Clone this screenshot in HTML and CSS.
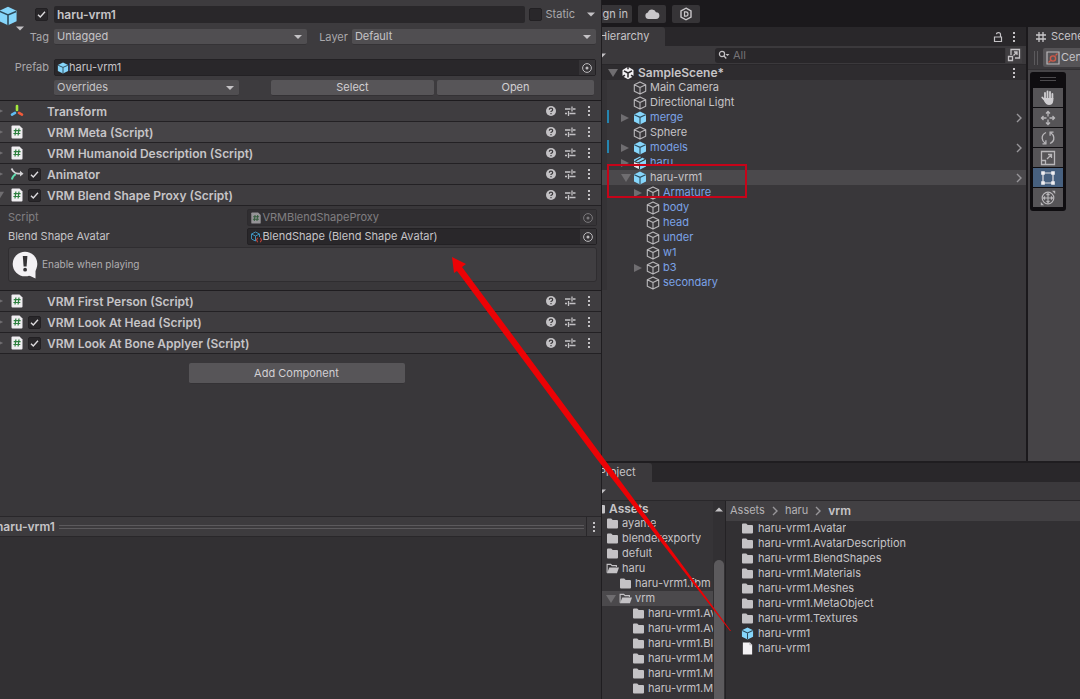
FILE: index.html
```html
<!DOCTYPE html>
<html lang="en">
<head>
<meta charset="utf-8">
<title>SampleScene</title>
<link rel="stylesheet" href="styles.css">
</head>
<body>
<svg class="defs" aria-hidden="true">
  <symbol id="cube" viewBox="0 0 14 14"><path d="M7 .5 13 3.4V10.600L7 13.500 1 10.600V3.400z" fill="#86d6fb"/><path d="M1.300 3.800 7 6.300l5.700-2.500M7 6.300v7" fill="none" stroke="#2d4a5a" stroke-width="1.100"/></symbol>
  <symbol id="box" viewBox="0 0 14 14"><path d="M7 .9 12.700 3.700v6.600L7 13.100 1.300 10.300V3.700zM1.300 3.700 7 6.500l5.700-2.800M7 6.500v6.600" fill="none" stroke="#b9b7ba" stroke-width="1.100" stroke-linejoin="round"/></symbol>
  <symbol id="model" viewBox="0 0 14 14"><path d="M7 .5 13 3.400V10.600L7 13.500 1 10.600V3.400z" fill="#86d6fb"/><path d="M1 6v4.600l6 2.900V8z" fill="#e6e4e7"/><path d="M1.300 5.500 5 7l7.500-3.800M6.500 7.500v6M2.500 5 9 1.200" fill="none" stroke="#353336" stroke-width="1.100"/></symbol>
  <symbol id="folder" viewBox="0 0 13 12"><path d="M1 2q0-1 1-1h3.200l1.500 1.500H11q1 0 1 1V10q0 1-1 1H2q-1 0-1-1z" fill="#c4c2c5"/></symbol>
  <symbol id="folder-open" viewBox="0 0 14 12"><path d="M1.200 10.500V1.500h3.900l1.400 1.400h4.700v1.600" fill="none" stroke="#c4c2c5" stroke-width="1.200"/><path d="M3.600 5H14l-2.200 6H1z" fill="#c4c2c5"/></symbol>
  <symbol id="page" viewBox="0 0 12 14"><path d="M1 .5h7.500L11 3v10.500H1z" fill="#f3f1f4"/><path d="M8.500.5V3H11" fill="none" stroke="#aaa8ab" stroke-width=".8"/></symbol>
  <symbol id="script" viewBox="0 0 12 14"><path d="M.5 1.500q0-1 1-1h7l3 3v9q0 1-1 1h-9q-1 0-1-1z" fill="#f0eef1"/><path d="M4.900 3.500 4 10.500M8 3.500 7.100 10.500M2.700 5.600h6.900M2.400 8.500h6.900" stroke="#2f8040" stroke-width="1.200" fill="none"/></symbol>
  <symbol id="axes" viewBox="0 0 14 14"><g stroke-width="2.600" stroke-linecap="round"><path d="M7 2v4" stroke="#a5ea3e"/><path d="M5 8.800 2 10.600" stroke="#61bdf2"/><path d="M9 8.800l3 1.800" stroke="#f05a3a"/></g></symbol>
  <symbol id="animator" viewBox="0 0 14 14"><path d="M1.500 1.500 3 4q2 2.500 5 2.600h3" fill="none" stroke="#d4d2d5" stroke-width="1.800"/><path d="M10 3.800 13.500 6.700 10 9.600z" fill="#d4d2d5"/><path d="M5.800 7.200Q3 8.500 1.800 12.500" fill="none" stroke="#5fdcaf" stroke-width="1.900"/></symbol>
  <symbol id="help" viewBox="0 0 12 12"><circle cx="6" cy="6" r="5" fill="#c4c2c5"/><path d="M4.300 4.800Q4.300 3.200 6 3.200T7.700 4.700Q7.700 5.600 6 6.500v.6M6 8v1.300" fill="none" stroke="#3b393c" stroke-width="1.200"/></symbol>
  <symbol id="sliders" viewBox="0 0 12 12"><path d="M1 4h5.500M9 4h2.500M8 1.500v5M1 8.500h2M5.500 8.500h6M4.500 6v5" fill="none" stroke="#c4c2c5" stroke-width="1.300"/></symbol>
  <symbol id="dots" viewBox="0 0 4 12"><path d="M1 1h2v2H1zM1 5h2v2H1zM1 9h2v2H1z" fill="#c4c2c5"/></symbol>
  <symbol id="target" viewBox="0 0 12 12"><circle cx="6" cy="6" r="4.400" fill="none" stroke="#bcbabd"/><circle cx="6" cy="6" r="1.500" fill="#bcbabd"/></symbol>
  <symbol id="right" viewBox="0 0 8 10"><path d="M0 1 8 5 0 9z" fill="#6f6d70"/></symbol>
  <symbol id="down" viewBox="0 0 10 8"><path d="M0 0h10L5 8z" fill="#6f6d70"/></symbol>
  <symbol id="caret" viewBox="0 0 8 5"><path d="M0 .5h8l-4 4z" fill="#c4c2c5"/></symbol>
  <symbol id="chevron" viewBox="0 0 6 10"><path d="M1 1l4 4-4 4" fill="none" stroke="#98969a" stroke-width="1.400"/></symbol>
  <symbol id="unity" viewBox="0 0 14 14"><path d="M7 .8 12.500 4v6.200L7 13.300 1.500 10.200V4z" fill="#f2f0f3"/><path d="M7 7 3 4.800M7 7l4-2.200M7 7v4.600M7 0v3.200M1 11l3-1.800M13 11l-3-1.800" stroke="#2b292c" stroke-width="1.500"/></symbol>
</svg>

<div class="app">
  <section class="inspector" aria-label="Inspector">
    <header class="object">
      <button class="object-icon" aria-label="Object icon"><svg class="i20"><use href="#cube"/></svg><svg class="mini"><use href="#caret"/></svg></button>
      <div class="object-fields">
        <div class="line name-line">
          <input class="check" type="checkbox" checked aria-label="Active">
          <input class="text strong" type="text" value="haru-vrm1" aria-label="Name">
          <input class="check" type="checkbox" id="static">
          <label for="static">Static</label>
          <button class="plain" aria-label="Static options"><svg class="car"><use href="#caret"/></svg></button>
        </div>
        <div class="line tag-line">
          <label class="lead" for="tag">Tag</label>
          <span class="drop tag"><select id="tag"><option>Untagged</option></select></span>
          <label class="layer" for="layer">Layer</label>
          <span class="drop"><select id="layer"><option>Default</option></select></span>
        </div>
        <div class="line prefab-line">
          <label class="lead" for="prefab">Prefab</label>
          <div class="ref"><svg class="i12"><use href="#cube"/></svg><input id="prefab" type="text" value="haru-vrm1" readonly><button aria-label="Pick prefab"><svg class="i12"><use href="#target"/></svg></button></div>
        </div>
        <div class="line action-line">
          <span class="drop"><select aria-label="Overrides"><option>Overrides</option></select></span>
          <button class="btn">Select</button>
          <button class="btn">Open</button>
        </div>
      </div>
    </header>

    <div class="comp"><button class="fold" aria-label="Expand"><svg class="tri"><use href="#right"/></svg></button><svg class="ci"><use href="#axes"/></svg><span class="slot"></span><h2>Transform</h2><button aria-label="Help"><svg class="i12"><use href="#help"/></svg></button><button aria-label="Presets"><svg class="i12"><use href="#sliders"/></svg></button><button aria-label="More"><svg class="dots"><use href="#dots"/></svg></button></div>
    <div class="comp hot"><button class="fold" aria-label="Expand"><svg class="tri"><use href="#right"/></svg></button><svg class="ci"><use href="#script"/></svg><span class="slot"></span><h2>VRM Meta (Script)</h2><button aria-label="Help"><svg class="i12"><use href="#help"/></svg></button><button aria-label="Presets"><svg class="i12"><use href="#sliders"/></svg></button><button aria-label="More"><svg class="dots"><use href="#dots"/></svg></button></div>
    <div class="comp"><button class="fold" aria-label="Expand"><svg class="tri"><use href="#right"/></svg></button><svg class="ci"><use href="#script"/></svg><span class="slot"></span><h2>VRM Humanoid Description (Script)</h2><button aria-label="Help"><svg class="i12"><use href="#help"/></svg></button><button aria-label="Presets"><svg class="i12"><use href="#sliders"/></svg></button><button aria-label="More"><svg class="dots"><use href="#dots"/></svg></button></div>
    <div class="comp"><button class="fold" aria-label="Expand"><svg class="tri"><use href="#right"/></svg></button><svg class="ci"><use href="#animator"/></svg><span class="slot"><input class="check" type="checkbox" checked aria-label="Animator enabled"></span><h2>Animator</h2><button aria-label="Help"><svg class="i12"><use href="#help"/></svg></button><button aria-label="Presets"><svg class="i12"><use href="#sliders"/></svg></button><button aria-label="More"><svg class="dots"><use href="#dots"/></svg></button></div>
    <div class="comp"><button class="fold" aria-label="Collapse"><svg class="tri"><use href="#down"/></svg></button><svg class="ci"><use href="#script"/></svg><span class="slot"><input class="check" type="checkbox" checked aria-label="Blend Shape Proxy enabled"></span><h2>VRM Blend Shape Proxy (Script)</h2><button aria-label="Help"><svg class="i12"><use href="#help"/></svg></button><button aria-label="Presets"><svg class="i12"><use href="#sliders"/></svg></button><button aria-label="More"><svg class="dots"><use href="#dots"/></svg></button></div>
    <div class="comp-body">
      <div class="prop off">
        <label for="script-ref">Script</label>
        <div class="ref"><svg class="i12"><use href="#script"/></svg><input id="script-ref" type="text" value="VRMBlendShapeProxy" readonly><button aria-label="Pick script"><svg class="i12"><use href="#target"/></svg></button></div>
      </div>
      <div class="prop">
        <label for="avatar-ref">Blend Shape Avatar</label>
        <div class="ref"><svg class="i12" viewBox="0 0 12 12"><path d="M5.500 1 9.500 3v3M5.500 1l-4 2v5l4 2M1.500 3l4 2 4-2M5.500 5v5" fill="none" stroke="#3f8fb8"/><path d="M8 7q-1 0-1 1t-.7 1q.7 0 .7 1t1 1M10 7q1 0 1 1t.7 1q-.7 0-.7 1t-1 1" fill="none" stroke="#e0483a"/></svg><input id="avatar-ref" type="text" value="BlendShape (Blend Shape Avatar)" readonly><button aria-label="Pick avatar"><svg class="i12"><use href="#target"/></svg></button></div>
      </div>
      <div class="note"><svg class="i28" viewBox="0 0 28 28"><circle cx="14" cy="13" r="12.300" fill="#f3f1f4"/><path d="M17 24l7.500 3.500V17z" fill="#f3f1f4"/><path d="M11.800 5h4.600l-.8 10.500h-3z" fill="#343235"/><circle cx="14.100" cy="18.700" r="1.900" fill="#343235"/></svg><p>Enable when playing</p></div>
    </div>
    <div class="comp"><button class="fold" aria-label="Expand"><svg class="tri"><use href="#right"/></svg></button><svg class="ci"><use href="#script"/></svg><span class="slot"></span><h2>VRM First Person (Script)</h2><button aria-label="Help"><svg class="i12"><use href="#help"/></svg></button><button aria-label="Presets"><svg class="i12"><use href="#sliders"/></svg></button><button aria-label="More"><svg class="dots"><use href="#dots"/></svg></button></div>
    <div class="comp"><button class="fold" aria-label="Expand"><svg class="tri"><use href="#right"/></svg></button><svg class="ci"><use href="#script"/></svg><span class="slot"><input class="check" type="checkbox" checked aria-label="Look At Head enabled"></span><h2>VRM Look At Head (Script)</h2><button aria-label="Help"><svg class="i12"><use href="#help"/></svg></button><button aria-label="Presets"><svg class="i12"><use href="#sliders"/></svg></button><button aria-label="More"><svg class="dots"><use href="#dots"/></svg></button></div>
    <div class="comp"><button class="fold" aria-label="Expand"><svg class="tri"><use href="#right"/></svg></button><svg class="ci"><use href="#script"/></svg><span class="slot"><input class="check" type="checkbox" checked aria-label="Look At Bone Applyer enabled"></span><h2>VRM Look At Bone Applyer (Script)</h2><button aria-label="Help"><svg class="i12"><use href="#help"/></svg></button><button aria-label="Presets"><svg class="i12"><use href="#sliders"/></svg></button><button aria-label="More"><svg class="dots"><use href="#dots"/></svg></button></div>
    <div class="add"><button class="btn">Add Component</button></div>
    <footer class="preview">
      <div class="preview-bar"><h2>haru-vrm1</h2><span class="drag"></span><button aria-label="Preview options"><svg class="dots"><use href="#dots"/></svg></button></div>
    </footer>
  </section>

  <div class="editor">
    <nav class="topbar">
      <button class="signin">Sign in</button>
      <button aria-label="Cloud"><svg class="i16" viewBox="0 0 16 16"><path d="M4.500 13a3.300 3.300 0 0 1-.6-6.500A4.300 4.300 0 0 1 12 6.200 3.400 3.400 0 0 1 12 13z" fill="#c9c7ca"/></svg></button>
      <button aria-label="Services"><svg class="i16" viewBox="0 0 16 16"><path d="M8 2.200 13 5v6l-5 2.800L3 11V5z" fill="none" stroke="#c9c7ca" stroke-width="1.400"/><path d="M6.500 5.800H8q2 0 2 2.200T8 10.200H6.500z" fill="none" stroke="#c9c7ca" stroke-width="1.200"/></svg></button>
    </nav>

    <div class="upper">
      <section class="hierarchy" aria-label="Hierarchy">
        <div class="tabs"><span class="tab">Hierarchy</span><span class="grow"></span><button aria-label="Lock"><svg class="i12" viewBox="0 0 12 12"><path d="M2.500 6h7v4.500h-7zM8.500 6V3.500Q8.500 1.600 6.500 1.600T4.500 3.300" fill="none" stroke="#c4c2c5" stroke-width="1.200"/></svg></button><button aria-label="More"><svg class="dots"><use href="#dots"/></svg></button></div>
        <div class="tools">
          <button class="plus" aria-label="Create"><svg class="car"><use href="#caret"/></svg></button>
          <label class="search"><svg viewBox="0 0 12 10"><circle cx="4" cy="4" r="2.600" fill="none" stroke="#c4c2c5" stroke-width="1.200"/><path d="M6 6l2.300 2.500" stroke="#c4c2c5" stroke-width="1.300"/><path d="M7.500 4h4L9.500 6z" fill="#c4c2c5"/></svg><input type="text" placeholder="All" aria-label="Search"></label>
          <button class="expand" aria-label="Open search"><svg class="i14" viewBox="0 0 14 14"><path d="M4 7V1.500h8.500V10H8M1.500 8.500h4v4h-4zM6.500 7.500 10 4M7 4h3v3" fill="none" stroke="#c4c2c5" stroke-width="1.300"/></svg></button>
        </div>
        <ul class="rows">
          <li class="root"><svg class="dn"><use href="#down"/></svg><svg class="i14"><use href="#unity"/></svg><b>SampleScene*</b><button aria-label="Scene options"><svg class="dots"><use href="#dots"/></svg></button></li>
          <li><i class="tw"></i><svg class="i14"><use href="#box"/></svg><span>Main Camera</span></li>
          <li><i class="tw"></i><svg class="i14"><use href="#box"/></svg><span>Directional Light</span></li>
          <li class="pre mark"><i class="tw"><svg class="rt"><use href="#right"/></svg></i><svg class="i14"><use href="#cube"/></svg><span>merge</span><svg class="chev"><use href="#chevron"/></svg></li>
          <li><i class="tw"></i><svg class="i14"><use href="#box"/></svg><span>Sphere</span></li>
          <li class="pre mark"><i class="tw"><svg class="rt"><use href="#right"/></svg></i><svg class="i14"><use href="#cube"/></svg><span>models</span><svg class="chev"><use href="#chevron"/></svg></li>
          <li class="pre"><i class="tw"><svg class="rt"><use href="#right"/></svg></i><svg class="i14"><use href="#model"/></svg><span>haru</span></li>
          <li class="sel"><i class="tw"><svg class="dn"><use href="#down"/></svg></i><svg class="i14"><use href="#cube"/></svg><span>haru-vrm1</span><svg class="chev"><use href="#chevron"/></svg></li>
          <li class="pre sub"><i class="tw"><svg class="rt"><use href="#right"/></svg></i><svg class="i14"><use href="#box"/></svg><span>Armature</span></li>
          <li class="pre sub"><i class="tw"></i><svg class="i14"><use href="#box"/></svg><span>body</span></li>
          <li class="pre sub"><i class="tw"></i><svg class="i14"><use href="#box"/></svg><span>head</span></li>
          <li class="pre sub"><i class="tw"></i><svg class="i14"><use href="#box"/></svg><span>under</span></li>
          <li class="pre sub"><i class="tw"></i><svg class="i14"><use href="#box"/></svg><span>w1</span></li>
          <li class="pre sub"><i class="tw"><svg class="rt"><use href="#right"/></svg></i><svg class="i14"><use href="#box"/></svg><span>b3</span></li>
          <li class="pre sub"><i class="tw"></i><svg class="i14"><use href="#box"/></svg><span>secondary</span></li>
        </ul>
      </section>

      <section class="scene" aria-label="Scene">
        <div class="scene-tab"><svg class="i12" viewBox="0 0 12 12"><path d="M4 1v10M8 1v10M1 4h10M1 8h10" stroke="#c9c7ca" stroke-width="1.300"/></svg><span>Scene</span></div>
        <div class="scene-tools"><span class="grip"></span><button><svg class="i14" viewBox="0 0 14 14"><path d="M1 1h12v12H1z" fill="none" stroke="#b9b7ba" stroke-width="1.200"/><circle cx="7" cy="7.500" r="2.600" fill="none" stroke="#d05a48" stroke-width="1.400"/><path d="M2.500 11.500 4.500 9.500M9.500 4.500l2-2" stroke="#d05a48" stroke-width="1.200"/></svg>Center</button></div>
        <div class="view">
          <div class="palette">
            <span class="handle"></span>
            <button aria-label="Hand"><svg class="i16" viewBox="0 0 16 16"><path d="M5 9.500V3M7.500 8V1.500M10 8V2M12.400 9V4M5 10.500 2.300 7.500" stroke="#d0ced1" stroke-width="1.800" stroke-linecap="round"/><path d="M4.100 8h9.200v2.500Q13 15 9 15q-3 0-4.900-4z" fill="#d0ced1"/></svg></button>
            <button aria-label="Move"><svg class="i16" viewBox="0 0 16 16"><path d="M8 2v4.500M8 9.500V14M2 8h4.500M9.500 8H14M6 3.500l2-2 2 2M6 12.500l2 2 2-2M3.500 6l-2 2 2 2M12.500 6l2 2-2 2" fill="none" stroke="#b9b7ba" stroke-width="1.300"/></svg></button>
            <button aria-label="Rotate"><svg class="i16" viewBox="0 0 16 16"><path d="M6 2.500Q1.800 4.500 2.200 8.500q.3 3 2.800 4.500M10 13.500q4.200-2 3.800-6Q13.500 4.500 11 3M2.500 13.800h3.400v-3.500M13.500 2.200h-3.400v3.500" fill="none" stroke="#b9b7ba" stroke-width="1.300"/></svg></button>
            <button aria-label="Scale"><svg class="i16" viewBox="0 0 16 16"><path d="M1.500 1.500h13v13h-13zM1.500 10.500h4v4M7 9l4.500-4.500M8 4.500h3.500V8" fill="none" stroke="#b9b7ba" stroke-width="1.300"/></svg></button>
            <button class="on" aria-label="Rect"><svg class="i16" viewBox="0 0 16 16"><path d="M3 3h10v10H3z" fill="none" stroke="#e4e2e5" stroke-width="1.200"/><path d="M1.200 1.200h3.600v3.600H1.200zM11.200 1.200h3.600v3.600h-3.600zM1.200 11.200h3.600v3.600H1.200zM11.200 11.200h3.600v3.600h-3.600z" fill="#f1eff2"/></svg></button>
            <button aria-label="Transform"><svg class="i16" viewBox="0 0 16 16"><circle cx="8" cy="8" r="5.800" fill="none" stroke="#b9b7ba" stroke-width="1.200"/><path d="M8 3.500v9M3.500 8h9M6.500 5 8 3.500 9.500 5M6.500 11 8 12.500 9.500 11M5 6.500 3.500 8 5 9.500M11 6.500 12.500 8 11 9.500" fill="none" stroke="#b9b7ba" stroke-width="1.100"/><path d="M12 .8h3.200V4zM.8 12v3.200H4z" fill="#b9b7ba"/></svg></button>
          </div>
        </div>
      </section>
    </div>

    <section class="project" aria-label="Project">
      <div class="tabs"><span class="tab">Project</span></div>
      <div class="tools"><button class="plus" aria-label="Create"><svg class="car"><use href="#caret"/></svg></button></div>
      <div class="split">
        <ul class="tree">
          <li class="d0"><svg class="i13"><use href="#folder"/></svg><b>Assets</b></li>
          <li class="d1"><svg class="i13"><use href="#folder"/></svg><span>ayame</span></li>
          <li class="d1"><svg class="i13"><use href="#folder"/></svg><span>blenderexporty</span></li>
          <li class="d1"><svg class="i13"><use href="#folder"/></svg><span>defult</span></li>
          <li class="d1"><svg class="i13"><use href="#folder-open"/></svg><span>haru</span></li>
          <li class="d2"><svg class="i13"><use href="#folder"/></svg><span>haru-vrm1.fbm</span></li>
          <li class="d1 sel"><svg class="dn"><use href="#down"/></svg><svg class="i13"><use href="#folder-open"/></svg><span>vrm</span></li>
          <li class="d3"><svg class="i13"><use href="#folder"/></svg><span>haru-vrm1.Avatar</span></li>
          <li class="d3"><svg class="i13"><use href="#folder"/></svg><span>haru-vrm1.AvatarDescription</span></li>
          <li class="d3"><svg class="i13"><use href="#folder"/></svg><span>haru-vrm1.BlendShapes</span></li>
          <li class="d3"><svg class="i13"><use href="#folder"/></svg><span>haru-vrm1.Materials</span></li>
          <li class="d3"><svg class="i13"><use href="#folder"/></svg><span>haru-vrm1.Meshes</span></li>
          <li class="d3"><svg class="i13"><use href="#folder"/></svg><span>haru-vrm1.MetaObject</span></li>
        </ul>
        <div class="bar"><button aria-label="Scroll up"><svg class="car up"><use href="#caret"/></svg></button><span class="thumb"></span></div>
        <div class="files">
          <nav class="crumbs"><a href="#">Assets</a><svg class="chev"><use href="#chevron"/></svg><a href="#">haru</a><svg class="chev"><use href="#chevron"/></svg><b>vrm</b></nav>
          <ul>
            <li><svg class="i13"><use href="#folder"/></svg><span>haru-vrm1.Avatar</span></li>
            <li><svg class="i13"><use href="#folder"/></svg><span>haru-vrm1.AvatarDescription</span></li>
            <li><svg class="i13"><use href="#folder"/></svg><span>haru-vrm1.BlendShapes</span></li>
            <li><svg class="i13"><use href="#folder"/></svg><span>haru-vrm1.Materials</span></li>
            <li><svg class="i13"><use href="#folder"/></svg><span>haru-vrm1.Meshes</span></li>
            <li><svg class="i13"><use href="#folder"/></svg><span>haru-vrm1.MetaObject</span></li>
            <li><svg class="i13"><use href="#folder"/></svg><span>haru-vrm1.Textures</span></li>
            <li><svg class="i13"><use href="#cube"/></svg><span>haru-vrm1</span></li>
            <li><svg class="i13"><use href="#page"/></svg><span>haru-vrm1</span></li>
          </ul>
        </div>
      </div>
    </section>
  </div>
</div>

<svg class="annotation" viewBox="0 0 1080 699" aria-hidden="true">
  <path d="M608 165H746V197H608z" fill="none" stroke="#c60419" stroke-width="2"/>
  <path d="M452 257 466 264 462 267 602 456 731 631 730 631 596 458 457 271 454 273z" fill="#ec0205"/>
</svg>
</body>
</html>
```
FILE: styles.css
```css
* { box-sizing: border-box; }

body {
  margin: 0;
  background: #39373a;
  color: #c6c4c7;
  font: 11px/15px Inter, "Liberation Sans", sans-serif;
}

.defs { position: absolute; width: 0; height: 0; }

svg { flex: none; display: block; }
.i12 { width: 12px; height: 12px; }
.i13 { width: 13px; height: 13px; }
.i14 { width: 14px; height: 14px; }
.i16 { width: 16px; height: 16px; }
.i20 { width: 20px; height: 20px; }
.i28 { width: 28px; height: 28px; }
.dots { width: 4px; height: 12px; }
.car { width: 8px; height: 5px; }
.up { transform: rotate(180deg); }
.rt { width: 8px; height: 10px; }
.dn { width: 10px; height: 8px; }
.chev { width: 6px; height: 10px; }

button, input, select { font: inherit; color: inherit; margin: 0; padding: 0; border: 0; background: none; min-width: 0; }
button { display: flex; align-items: center; justify-content: center; flex: none; }
h2, p, ul { margin: 0; padding: 0; list-style: none; }
h2, b { font-size: 12px; font-weight: 600; }
li span { white-space: nowrap; min-width: 0; overflow: hidden; }

.app {
  display: grid;
  grid-template-columns: minmax(0, 602fr) minmax(0, 478fr);
  height: 100vh;
  overflow: hidden;
}

/* Inspector */
.inspector {
  display: flex;
  flex-direction: column;
  min-height: 0;
  overflow: hidden;
  background: #39373a;
  border-right: 1px solid #1f1d20;
}

.object {
  display: flex;
  padding: 6px 5px 4px 0;
  background: #3d3b3e;
  border-bottom: 1px solid #1d1b1e;
}
.object-icon { width: 24px; flex-direction: column; align-items: flex-end; justify-content: flex-start; }
.object-icon .i20 { margin-right: 6px; }
.mini { width: 8px; height: 5px; }
.object-fields { flex: 1; min-width: 0; }
.line { display: flex; align-items: center; height: 16px; }
.line label { color: #aaa8ab; }
.lead { width: 30px; padding-right: 5px; text-align: right; display: flex; justify-content: flex-end; flex: none; }

.check {
  appearance: none;
  flex: none;
  width: 13px;
  height: 13px;
  background: #29272a;
  border: 1px solid #222023;
  border-radius: 2px;
}
.check:checked {
  background: #29272a url("data:image/svg+xml,%3Csvg xmlns='http://www.w3.org/2000/svg' viewBox='0 0 11 11'%3E%3Cpath d='M2 5.700 4.300 8 9 2.800' fill='none' stroke='%23dddbde' stroke-width='1.400'/%3E%3C/svg%3E") center / 11px 11px no-repeat;
}

.name-line { height: 17px; padding-left: 11px; gap: 4px; }
.name-line .text {
  flex: 1;
  height: 17px;
  margin-left: 2px;
  padding: 0 3px;
  font-size: 12px;
  font-weight: 600;
  background: #29272a;
  border-radius: 2px;
}
.name-line .plain { width: 10px; margin-left: 7px; height: 16px; }

.tag-line { margin-top: 6px; }
.drop { position: relative; flex: 243; display: block; }
.drop.tag { flex: 252; }
.drop select {
  appearance: none;
  display: block;
  width: 100%;
  height: 16px;
  padding-left: 3px;
  background: #504e51;
  border-bottom: 1px solid #353336;
  border-radius: 2px;
}
.drop::after {
  content: "";
  position: absolute;
  top: 6px;
  right: 5px;
  border: 4px solid transparent;
  border-top-color: #c4c2c5;
  border-bottom: 0;
  pointer-events: none;
}
.layer { margin: 0 4px 0 12px; }

.prefab-line { margin-top: 14px; height: 17px; }
.prefab-line .lead { margin-left: -16px; width: 46px; }
.ref {
  flex: 1;
  min-width: 0;
  display: flex;
  align-items: center;
  height: 17px;
  padding-left: 2px;
  background: #29272a;
  border: 1px solid #232124;
  border-radius: 2px;
}
.ref input { flex: 1; height: 15px; outline: 0; }
.ref button { width: 16px; height: 15px; background: #353336; }

.action-line { margin-top: 4px; padding: 0 2px 0 30px; gap: 3px; }
.action-line .drop { flex: 185; margin-right: 29px; }
.action-line .btn { flex: 163; }
.action-line .btn:last-child { flex: 157; }
.btn { height: 16px; background: #575558; border-bottom: 1px solid #343235; border-radius: 2px; color: #d2d0d3; }

.comp {
  display: flex;
  align-items: center;
  flex: none;
  height: 21px;
  padding-right: 3px;
  background: #3f3d40;
  border-bottom: 1px solid #232124;
}
.comp.hot { background: #464447; }
.fold { width: 10px; justify-content: flex-start; }
.tri { width: 8px; height: 8px; margin-left: -4px; }
.ci { width: 14px; height: 14px; }
.slot { width: 23px; padding-left: 4px; display: flex; }
.comp h2 { flex: 1; white-space: nowrap; }
.comp > button:not(.fold) { width: 19px; height: 19px; }

.comp-body { padding: 3px 4px 8px 8px; border-bottom: 1px solid #1f1d20; }
.prop { display: grid; grid-template-columns: 239fr 349fr; align-items: center; margin-bottom: 2px; }
.off { opacity: .5; }
.note {
  display: flex;
  align-items: center;
  height: 35px;
  padding-left: 2px;
  gap: 3px;
  background: #403e41;
  border: 1px solid #2f2d30;
  border-radius: 3px;
}
.note p { font-size: 10px; color: #b0aeb1; }

.add { display: flex; justify-content: center; padding: 9px 0 0; margin-right: 8px; }
.add .btn { width: 216px; height: 21px; }

.preview { margin-top: auto; height: 183px; background: #323033; border-top: 1px solid #29272a; }
.preview-bar { display: flex; align-items: center; height: 20px; background: #3d3b3e; border-bottom: 1px solid #29272a; }
.preview-bar h2 { margin-left: -4px; }
.drag { flex: 1; height: 4px; margin: 0 2px 0 4px; border: solid #5c5a5d; border-width: 1px 0; }
.preview-bar button { width: 15px; height: 19px; border-left: 1px solid #29272a; }

/* Editor windows */
.editor { display: flex; flex-direction: column; min-width: 0; overflow: hidden; }
.topbar { display: flex; gap: 6px; padding: 5px 0 4px; height: 27px; flex: none; background: #1b191c; }
.topbar button { width: 28px; height: 18px; background: #363437; border-radius: 2px; }
.topbar .signin { width: 48px; margin-left: -18px; padding-right: 4px; justify-content: flex-end; }

.upper { flex: none; display: grid; grid-template-columns: minmax(0, 1fr) 52px; column-gap: 2px; height: 434px; background: #1b191c; }

.tabs { display: flex; align-items: center; height: 19px; background: #29272a; padding-right: 10px; flex: none; }
.tab { height: 19px; padding: 2px 16px 0 0; margin-left: -3px; background: #3b393c; border-radius: 0 3px 0 0; }
.grow { flex: 1; }
.tabs button + button { margin-left: 8px; }
.tools { display: flex; align-items: center; height: 19px; background: #3b393c; border-bottom: 1px solid #29272a; flex: none; }
.plus { margin-left: -4px; }

.hierarchy { background: #39373a; overflow: hidden; }
.search { flex: 1; display: flex; align-items: center; height: 15px; margin-left: 109px; padding-left: 3px; gap: 3px; background: #29272a; border-radius: 3px 0 0 3px; }
.search svg { width: 12px; height: 10px; }
.search input { flex: 1; outline: 0; }
.search input::placeholder { color: #757376; opacity: 1; }
.expand { width: 16px; height: 15px; margin: 0 4px 0 1px; background: #403e41; }

.rows li { display: flex; align-items: center; height: 15px; padding-left: 18px; border-left: 5px solid #353336; }
.rows li > span, .rows li > b { margin-left: 3px; flex: 1; }
.rows .root { padding: 0 10px 0 1px; background: #2e2c2f; border-color: #2e2c2f; }
.rows .root > svg + svg { margin-left: 3px; }
.rows .chev { margin-right: 4px; }
.rows .tw { width: 12px; display: flex; justify-content: flex-start; margin-left: -4px; }
.rows .pre { color: #7ba2e6; }
.rows .mark { background: linear-gradient(#2585b0, #2585b0) 0 0 / 2px 13px no-repeat; }
.rows .sel { background: #4b494c; border-color: #4b494c; }
.rows .sub { padding-left: 31px; }

.scene { display: flex; flex-direction: column; min-width: 0; overflow: hidden; background: #464447; }
.scene-tab { display: flex; align-items: center; gap: 4px; height: 19px; padding-left: 7px; background: #3b393c; flex: none; }
.scene-tools { display: flex; align-items: center; height: 24px; padding-left: 6px; background: #3b393c; border-bottom: 1px solid #323033; flex: none; }
.grip { width: 4px; height: 14px; margin-right: 5px; border: solid #5c5a5d; border-width: 0 1px; flex: none; }
.scene-tools button { height: 19px; padding: 0 6px 0 3px; gap: 1px; background: #565457; border-radius: 2px; }
.view { padding: 2px; }
.palette { width: 36px; display: flex; flex-direction: column; gap: 1px; padding: 5px 3px 4px; background: #0f0d10; border-radius: 3px; }
.handle { height: 4px; margin: 0 7px 6px; border: solid #4c4a4d; border-width: 1px 0; }
.palette button { height: 19px; background: #565457; }
.palette .on { background: #47607f; }

/* Project */
.project { flex: 1; min-height: 0; display: flex; flex-direction: column; border-top: 2px solid #1f1d20; }
.split { flex: 1; min-height: 0; display: grid; grid-template-columns: 111px 13px minmax(0, 1fr); }
.tree, .files { min-width: 0; overflow: hidden; background: #363437; }
.tree li, .files li { display: flex; align-items: center; height: 15px; gap: 3px; }
.tree .d0 { margin-left: -9px; }
.tree .d1 { padding-left: 4px; }
.tree .d2 { padding-left: 17px; }
.tree .d3 { padding-left: 30px; }
.tree .sel { background: #4b494c; }
.bar { display: flex; flex-direction: column; align-items: center; background: #323033; border-right: 1px solid #242225; padding-top: 6px; overflow: hidden; }
.thumb { flex: 1; width: 10px; margin-top: 48px; background: #5c5a5d; border-radius: 5px 5px 0 0; }
.files { background: #323033; }
.crumbs { display: flex; align-items: center; gap: 7px; height: 20px; padding: 0 0 1px 4px; background: #424043; }
.crumbs a { color: #b4b2b5; text-decoration: none; }
.files ul { padding-left: 15px; }
.files li { gap: 4px; }

.annotation { position: absolute; top: 0; left: 0; width: 1080px; height: 699px; pointer-events: none; }
```
